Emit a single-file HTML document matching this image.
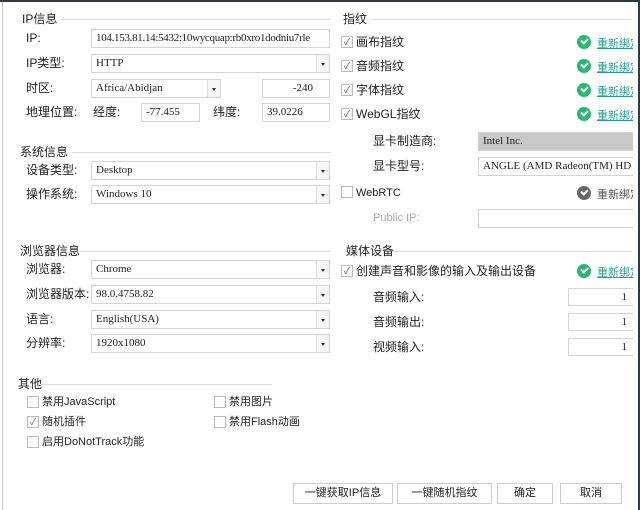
<!DOCTYPE html>
<html><head><meta charset="utf-8"><style>
*{margin:0;padding:0;box-sizing:border-box}
body{width:640px;height:510px;background:#fff;position:relative;overflow:hidden;font-family:"Liberation Sans","Noto Sans CJK SC",sans-serif;font-size:12px;color:#222}
.a{position:absolute;white-space:nowrap}
.t{position:absolute;white-space:nowrap;line-height:14px}
.ln{position:absolute;height:1px;background:#dcdcdc}
.in{position:absolute;border:1px solid #d4d4d4;background:#fff;font-family:"Liberation Serif","Noto Sans CJK SC",serif;font-size:11px;line-height:17px;padding-left:4px;overflow:hidden;white-space:nowrap;color:#222}
.cb .ar{position:absolute;right:0;top:0;bottom:0;width:13px;border-left:1px solid #ddd;background:#f6f6f6}
.cb .ar:after{content:"";position:absolute;left:4px;top:8px;border:2px solid transparent;border-top:3px solid #333}
.ck{position:absolute;width:12px;height:12px;border:1px solid #bbb;background:#fff;font-size:9px;line-height:10px;text-align:center;color:#555}
.ok{position:absolute;width:14px;height:14px;border-radius:50%;background:#2bb673}
.ok:after{content:"";position:absolute;left:4px;top:3px;width:5px;height:3px;border-left:2px solid #fff;border-bottom:2px solid #fff;transform:rotate(-45deg)}
.lk{position:absolute;color:#2a9d8f;text-decoration:underline;font-size:11px;white-space:nowrap}
</style></head><body>
<div class="a" style="left:2px;top:2px;width:1px;height:508px;background:#c8c8c8"></div>

<div class="t" style="left:22px;top:12px">IP信息</div><div class="ln" style="left:62px;top:19px;width:268px"></div>
<div class="t" style="left:26px;top:31px">IP:</div>
<div class="in" style="left:91px;top:29px;width:239px;height:19px;letter-spacing:-0.3px">104.153.81.14:5432:10wycquap:rb0xro1dodniu7rle</div>
<div class="t" style="left:26px;top:56px">IP类型:</div>
<div class="in cb" style="left:91px;top:54px;width:239px;height:19px">HTTP<span class="ar"></span></div>
<div class="t" style="left:26px;top:81px">时区:</div>
<div class="in cb" style="left:91px;top:79px;width:130px;height:19px">Africa/Abidjan<span class="ar"></span></div>
<div class="in" style="left:262px;top:79px;width:68px;height:19px;text-align:right;padding-right:16px">-240</div>
<div class="t" style="left:26px;top:105px">地理位置:</div>
<div class="t" style="left:93px;top:105px">经度:</div>
<div class="in" style="left:141px;top:103px;width:59px;height:19px">-77.455</div>
<div class="t" style="left:213px;top:105px">纬度:</div>
<div class="in" style="left:262px;top:103px;width:68px;height:19px">39.0226</div>

<div class="t" style="left:20px;top:145px">系统信息</div><div class="ln" style="left:72px;top:152px;width:258px"></div>
<div class="t" style="left:26px;top:163px">设备类型:</div>
<div class="in cb" style="left:91px;top:161px;width:239px;height:19px">Desktop<span class="ar"></span></div>
<div class="t" style="left:26px;top:187px">操作系统:</div>
<div class="in cb" style="left:91px;top:185px;width:239px;height:19px">Windows 10<span class="ar"></span></div>

<div class="t" style="left:20px;top:244px">浏览器信息</div><div class="ln" style="left:80px;top:251px;width:250px"></div>
<div class="t" style="left:26px;top:262px">浏览器:</div>
<div class="in cb" style="left:91px;top:260px;width:239px;height:19px">Chrome<span class="ar"></span></div>
<div class="t" style="left:26px;top:287px">浏览器版本:</div>
<div class="in cb" style="left:91px;top:285px;width:239px;height:19px">98.0.4758.82<span class="ar"></span></div>
<div class="t" style="left:26px;top:312px">语言:</div>
<div class="in cb" style="left:91px;top:310px;width:239px;height:19px">English(USA)<span class="ar"></span></div>
<div class="t" style="left:26px;top:336px">分辨率:</div>
<div class="in cb" style="left:91px;top:334px;width:239px;height:19px">1920x1080<span class="ar"></span></div>

<div class="t" style="left:18px;top:377px">其他</div><div class="ln" style="left:40px;top:384px;width:232px"></div>
<div class="ck" style="left:27px;top:396px"></div><div class="t" style="left:42px;top:395px;font-size:11px">禁用JavaScript</div>
<div class="ck" style="left:214px;top:396px"></div><div class="t" style="left:229px;top:395px;font-size:11px">禁用图片</div>
<div class="ck" style="left:27px;top:416px">✓</div><div class="t" style="left:42px;top:415px;font-size:11px">随机插件</div>
<div class="ck" style="left:214px;top:416px"></div><div class="t" style="left:229px;top:415px;font-size:11px">禁用Flash动画</div>
<div class="ck" style="left:27px;top:436px"></div><div class="t" style="left:42px;top:435px;font-size:11px">启用DoNotTrack功能</div>

<div class="t" style="left:343px;top:12px">指纹</div><div class="ln" style="left:373px;top:19px;width:259px"></div>
<div class="ck" style="left:341px;top:36px">✓</div><div class="t" style="left:356px;top:35px">画布指纹</div>
<div class="ck" style="left:341px;top:60px">✓</div><div class="t" style="left:356px;top:59px">音频指纹</div>
<div class="ck" style="left:341px;top:84px">✓</div><div class="t" style="left:356px;top:83px">字体指纹</div>
<div class="ck" style="left:341px;top:108px">✓</div><div class="t" style="left:356px;top:107px">WebGL指纹</div>
<div class="ok" style="left:577px;top:35px"></div><div class="lk" style="left:597px;top:35px">重新绑定</div>
<div class="ok" style="left:577px;top:59px"></div><div class="lk" style="left:597px;top:59px">重新绑定</div>
<div class="ok" style="left:577px;top:83px"></div><div class="lk" style="left:597px;top:83px">重新绑定</div>
<div class="ok" style="left:577px;top:107px"></div><div class="lk" style="left:597px;top:107px">重新绑定</div>
<div class="t" style="left:373px;top:134px">显卡制造商:</div>
<div class="in" style="left:478px;top:132px;width:160px;height:19px;background:#c9c9c9">Intel Inc.</div>
<div class="t" style="left:373px;top:159px">显卡型号:</div>
<div class="in" style="left:478px;top:157px;width:160px;height:19px">ANGLE (AMD Radeon(TM) HD 638</div>
<div class="ck" style="left:341px;top:186px"></div><div class="t" style="left:356px;top:186px;font-size:11px">WebRTC</div>
<div class="ok" style="left:577px;top:186px;background:#666"></div><div class="a" style="left:597px;top:186px;font-size:11px;color:#555">重新绑定</div>
<div class="t" style="left:373px;top:211px;color:#aaa;font-size:11px">Public IP:</div>
<div class="in" style="left:478px;top:209px;width:160px;height:19px"></div>
<div class="t" style="left:346px;top:244px">媒体设备</div><div class="ln" style="left:393px;top:251px;width:239px"></div>
<div class="ck" style="left:341px;top:265px">✓</div><div class="t" style="left:356px;top:264px">创建声音和影像的输入及输出设备</div>
<div class="ok" style="left:577px;top:264px"></div><div class="lk" style="left:597px;top:264px">重新绑定</div>
<div class="t" style="left:373px;top:290px">音频输入:</div>
<div class="in" style="left:568px;top:288px;width:70px;height:18px;text-align:right;padding-right:10px">1</div>
<div class="t" style="left:373px;top:315px">音频输出:</div>
<div class="in" style="left:568px;top:313px;width:70px;height:18px;text-align:right;padding-right:10px">1</div>
<div class="t" style="left:373px;top:340px">视频输入:</div>
<div class="in" style="left:568px;top:338px;width:70px;height:18px;text-align:right;padding-right:10px">1</div>

<div class="a" style="left:293px;top:483px;width:100px;height:21px;border:1px solid #ccc;text-align:center;line-height:19px;font-size:11px">一键获取IP信息</div>
<div class="a" style="left:397px;top:483px;width:95px;height:21px;border:1px solid #ccc;text-align:center;line-height:19px;font-size:11px">一键随机指纹</div>
<div class="a" style="left:497px;top:483px;width:56px;height:21px;border:1px solid #ccc;text-align:center;line-height:19px;font-size:11px">确定</div>
<div class="a" style="left:560px;top:483px;width:62px;height:21px;border:1px solid #ccc;text-align:center;line-height:19px;font-size:11px">取消</div>

<div class="a" style="left:633px;top:2px;width:5px;height:508px;background:#fff"></div>
<div class="a" style="left:0;top:0;width:640px;height:2px;background:#2e3b48"></div>
<div class="a" style="left:638px;top:0;width:2px;height:510px;background:#2e3b48"></div>
</body></html>
